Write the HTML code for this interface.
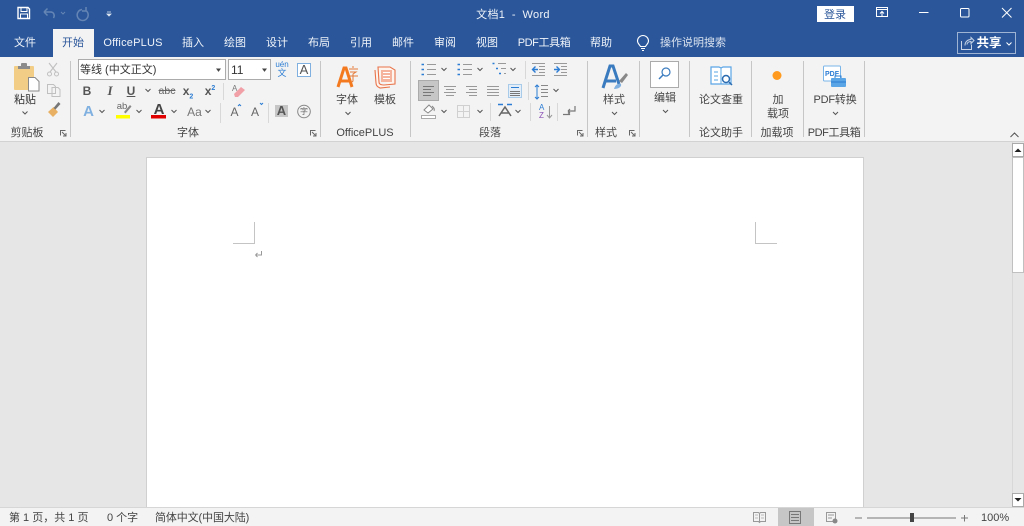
<!DOCTYPE html>
<html><head><meta charset="utf-8"><style>
html,body{margin:0;padding:0;width:1024px;height:526px;overflow:hidden;background:#e6e6e6}
body{position:relative;font-family:"Liberation Sans","Noto Sans CJK SC",sans-serif;font-size:11px;color:#444}
.a{position:absolute}
.t{position:absolute;white-space:nowrap;line-height:14px;transform:translateX(-50%)}
.w{font-size:11px;color:#f0f4fa}
.s{position:absolute;background:#c6c6c6;width:1px}
svg{position:absolute;left:0;top:0}
</style></head><body>
<div class="a" style="left:0;top:0;width:1024px;height:57px;background:#2b579a"></div>
<div class="a" style="left:0;top:57px;width:1024px;height:84px;background:#f3f3f3"></div>
<div class="a" style="left:0;top:141px;width:1024px;height:1px;background:#d2d2d2"></div>
<div class="a" style="left:53px;top:29px;width:41px;height:28px;background:#f3f3f3"></div>
<div class="t w" style="left:513px;top:8px;letter-spacing:.3px">文档1 &nbsp;-&nbsp; Word</div>
<div class="t w" style="left:25px;top:36px">文件</div>
<div class="t" style="left:73px;top:36px;color:#2b579a">开始</div>
<div class="t w" style="left:133px;top:36px;letter-spacing:.2px">OfficePLUS</div>
<div class="t w" style="left:193px;top:36px">插入</div>
<div class="t w" style="left:235px;top:36px">绘图</div>
<div class="t w" style="left:277px;top:36px">设计</div>
<div class="t w" style="left:319px;top:36px">布局</div>
<div class="t w" style="left:361px;top:36px">引用</div>
<div class="t w" style="left:403px;top:36px">邮件</div>
<div class="t w" style="left:445px;top:36px">审阅</div>
<div class="t w" style="left:487px;top:36px">视图</div>
<div class="t w" style="left:544px;top:36px;letter-spacing:-.4px">PDF工具箱</div>
<div class="t w" style="left:601px;top:36px">帮助</div>
<div class="t w" style="left:693px;top:36px;color:#dbe3ef">操作说明搜索</div>
<div class="a" style="left:817px;top:6px;width:37px;height:16px;background:#fff"></div>
<div class="t" style="left:835px;top:8px;color:#2b579a">登录</div>
<div class="a" style="left:957px;top:32px;width:59px;height:22px;border:1px solid #9fb4d3;box-sizing:border-box"></div>
<div class="t" style="left:989px;top:36px;color:#fff;font-weight:bold;font-size:12.500px">共享</div>

<!-- combo boxes -->
<div class="a" style="left:78px;top:59px;width:148px;height:21px;background:#fff;border:1px solid #ababab;box-sizing:border-box"></div>
<div class="a" style="left:228px;top:59px;width:43px;height:21px;background:#fff;border:1px solid #ababab;box-sizing:border-box"></div>
<div class="a" style="left:80px;top:63px;white-space:nowrap;line-height:14px;color:#333">等线 (中文正文)</div>
<div class="a" style="left:231px;top:63px;line-height:14px;color:#333;font-size:12px">11</div>
<div class="a" style="left:418px;top:80px;width:21px;height:21px;background:#c6c6c6;border:1px solid #ababab;box-sizing:border-box"></div>
<div class="a" style="left:650px;top:61px;width:29px;height:27px;background:#fff;border:1px solid #ababab;box-sizing:border-box"></div>

<!-- separators -->
<div class="s" style="left:70px;top:61px;height:76px"></div>
<div class="s" style="left:320px;top:61px;height:76px"></div>
<div class="s" style="left:410px;top:61px;height:76px"></div>
<div class="s" style="left:587px;top:61px;height:76px"></div>
<div class="s" style="left:639px;top:61px;height:76px"></div>
<div class="s" style="left:689px;top:61px;height:76px"></div>
<div class="s" style="left:751px;top:61px;height:76px"></div>
<div class="s" style="left:803px;top:61px;height:76px"></div>
<div class="s" style="left:864px;top:61px;height:76px"></div>
<div class="s" style="left:220px;top:103px;height:20px;background:#d8d8d8"></div>
<div class="s" style="left:268px;top:103px;height:20px;background:#d8d8d8"></div>
<div class="s" style="left:223px;top:83px;height:17px;background:#d8d8d8"></div>
<div class="s" style="left:525px;top:61px;height:18px;background:#d8d8d8"></div>
<div class="s" style="left:528px;top:82px;height:18px;background:#d8d8d8"></div>
<div class="s" style="left:490px;top:103px;height:18px;background:#d8d8d8"></div>
<div class="s" style="left:530px;top:103px;height:18px;background:#d8d8d8"></div>
<div class="s" style="left:557px;top:103px;height:18px;background:#d8d8d8"></div>

<!-- ribbon labels -->
<div class="t" style="left:25px;top:93px;color:#333">粘贴</div>
<div class="t" style="left:347px;top:93px">字体</div>
<div class="t" style="left:385px;top:93px">模板</div>
<div class="t" style="left:614px;top:93px">样式</div>
<div class="t" style="left:665px;top:91px">编辑</div>
<div class="t" style="left:721px;top:93px">论文查重</div>
<div class="t" style="left:778px;top:93px">加</div>
<div class="t" style="left:778px;top:107px">载项</div>
<div class="t" style="left:835px;top:93px;letter-spacing:-.2px">PDF转换</div>
<div class="t" style="left:27px;top:126px">剪贴板</div>
<div class="t" style="left:188px;top:126px">字体</div>
<div class="t" style="left:365px;top:126px">OfficePLUS</div>
<div class="t" style="left:490px;top:126px">段落</div>
<div class="t" style="left:606px;top:126px">样式</div>
<div class="t" style="left:721px;top:126px">论文助手</div>
<div class="t" style="left:777px;top:126px">加载项</div>
<div class="t" style="left:834px;top:126px;letter-spacing:-.4px">PDF工具箱</div>

<!-- font row text -->
<div class="t" style="left:87px;top:84px;font-weight:bold;font-size:12px;color:#555">B</div>
<div class="t" style="left:110px;top:84px;font-style:italic;font-family:'Liberation Serif',serif;font-size:13px;font-weight:bold;color:#555">I</div>
<div class="t" style="left:131px;top:84px;font-weight:bold;font-size:12px;text-decoration:underline;color:#555">U</div>
<div class="t" style="left:167px;top:84px;font-size:10.500px;text-decoration:line-through;color:#666">abc</div>
<div class="t" style="left:188px;top:84px;font-weight:bold;font-size:12px;color:#555">x<sub style="font-size:7px;color:#2b7cd3;line-height:0">2</sub></div>
<div class="t" style="left:210px;top:84px;font-weight:bold;font-size:12px;color:#555">x<sup style="font-size:7px;color:#2b7cd3;line-height:0">2</sup></div>
<div class="t" style="left:88.500px;top:105px;font-size:15px;font-weight:bold;color:#7fb0e0">A</div>
<div class="t" style="left:122px;top:100px;font-size:9.500px;color:#666">ab</div>
<div class="t" style="left:159px;top:103px;font-size:15px;color:#444;font-weight:bold">A</div>
<div class="t" style="left:194.500px;top:105px;font-size:12px;color:#777">Aa</div>
<div class="t" style="left:234.500px;top:105px;font-size:12px;color:#666">A</div>
<div class="t" style="left:255px;top:105px;font-size:12px;color:#666">A</div>
<div class="a" style="left:275px;top:105px;width:13px;height:12px;background:#c6c6c6;text-align:center;font-weight:bold;font-size:13px;line-height:12px;color:#555">A</div>
<div class="t" style="left:304px;top:105px;font-size:8px;color:#666">字</div>
<div class="t" style="left:282px;top:61px;font-size:8px;line-height:8px;color:#2b7cd3">uén</div>
<div class="t" style="left:282px;top:68px;font-size:9px;line-height:10px;color:#2b7cd3">文</div>
<div class="a" style="left:297px;top:63px;width:14px;height:14px;box-sizing:border-box;font-size:13px;line-height:12px;text-align:center;border:1px solid #7fb0e0;background:#fff;color:#555">A</div>

<!-- document area -->
<div class="a" style="left:146px;top:157px;width:718px;height:351px;background:#fff;border:1px solid #d0d0d0;box-sizing:border-box"></div>
<!-- scrollbar -->
<div class="a" style="left:1012px;top:142px;width:12px;height:365px;background:#e6e6e6;border-left:1px solid #d8d8d8;box-sizing:border-box"></div>
<div class="a" style="left:1012px;top:143px;width:12px;height:14px;background:#fff;border:1px solid #aaa;box-sizing:border-box"></div>
<div class="a" style="left:1012px;top:157px;width:12px;height:116px;background:#fff;border:1px solid #c0c0c0;box-sizing:border-box"></div>
<div class="a" style="left:1012px;top:493px;width:12px;height:14px;background:#fff;border:1px solid #aaa;box-sizing:border-box"></div>
<!-- status -->
<div class="a" style="left:0;top:507px;width:1024px;height:19px;background:#f3f3f3;border-top:1px solid #d6d6d6;box-sizing:border-box"></div>
<div class="a" style="left:778px;top:508px;width:36px;height:18px;background:#c6c6c6"></div>
<div class="a" style="left:9px;top:511px;white-space:nowrap;line-height:14px;color:#444">第 1 页，共 1 页</div>
<div class="a" style="left:107px;top:511px;white-space:nowrap;line-height:14px;color:#444">0 个字</div>
<div class="a" style="left:155px;top:511px;white-space:nowrap;line-height:14px;color:#444;letter-spacing:-.12px">简体中文(中国大陆)</div>
<div class="a" style="left:981px;top:511px;white-space:nowrap;line-height:14px;color:#444">100%</div>

<svg width="1024" height="526" viewBox="0 0 1024 526" fill="none">
<!-- QAT -->
<path d="M18 7.500h10l1.500 1.500v9.500h-11.500z" stroke="#fff" stroke-width="1.400"/><path d="M21 8v3.500h6V8M20.500 18.500v-4.500h7v4.500" stroke="#fff"/>
<path d="M44 12l3.500-3.500M44 12l3.500 3.500M44.500 12h6c3.500 0 4.500 3.500 3 6" stroke="#6585b5" stroke-width="1.500"/>
<path d="M61 12l2 2 2-2" stroke="#6585b5"/>
<path d="M82 9.500a5.500 5.500 0 1 0 4.500 1.500M86 7v4h-4" stroke="#6585b5" stroke-width="1.500"/>
<path d="M107 12h4M107 14h4l-2 2z" stroke="#dfe7f2" fill="#dfe7f2" stroke-width=".8"/>
<!-- window -->
<rect x="876.500" y="7.500" width="11" height="9" stroke="#fff"/><path d="M876 9.500h12M882 16v-4M880 13.500l2-2 2 2" stroke="#fff"/>
<path d="M919 12.500h9.500" stroke="#fff"/>
<rect x="960.500" y="8.500" width="8.500" height="8.500" rx="1" stroke="#fff"/>
<path d="M1002 8l9.500 9.500M1011.500 8l-9.500 9.500" stroke="#fff"/>
<!-- bulb -->
<path d="M640.500 46.500c-1-2-3-3-3-5.500a5.500 5.500 0 0 1 11 0c0 2.500-2 3.500-3 5.500zM641 48.500h4M642 50.500h2" stroke="#fff" stroke-width="1.100"/>
<!-- share -->
<path d="M961.500 41v8.500h10v-5M965 45.500c0-4 3-6 6-6v-2l3 3-3 3v-2c-2 0-4 1-4 3" stroke="#c8d4e6"/>
<path d="M1006.500 42.500l2.500 2.500 2.500-2.500" stroke="#fff"/>
<!-- paste -->
<rect x="14" y="66" width="20" height="24" rx="1" fill="#f2cd86"/>
<rect x="21" y="63" width="6" height="4" rx="1" fill="#8b8b8b"/><rect x="18" y="66" width="12" height="3" fill="#8b8b8b"/>
<path d="M28.500 77.500h6.500l4 4v9.500h-10.500z" fill="#fff" stroke="#8a8a8a"/>
<path d="M22.500 111.500l2.500 2.500 2.500-2.500" stroke="#555"/>
<!-- cut copy painter -->
<path d="M49 63l7 9M57 63l-7 9" stroke="#c0c0c0" stroke-width="1.100"/><circle cx="49.500" cy="74" r="2" stroke="#c0c0c0"/><circle cx="56.500" cy="74" r="2" stroke="#c0c0c0"/>
<path d="M47.500 84.500h6l2 2v7h-8zM52 87.500h6l2 2v7h-8z" fill="#f3f3f3" stroke="#c0c0c0"/>
<path d="M48 112l5 5 5-5-4.500-5z" fill="#e8b062"/><path d="M53.500 108l5-6 2 2-5 5.500z" fill="#777"/>
<!-- dialog launchers -->
<g stroke="#666"><path d="M60.500 135.500v-5h5M62 132l4 4M66 133v3h-3"/><path d="M310.500 135.500v-5h5M312 132l4 4M316 133v3h-3"/><path d="M577.500 135.500v-5h5M579 132l4 4M583 133v3h-3"/><path d="M629.500 135.500v-5h5M631 132l4 4M635 133v3h-3"/></g>
<!-- combos arrows -->
<path d="M217 69l3 0-1.500 2z M263 69l3 0-1.500 2z" fill="#444" stroke="#444"/>
<g stroke="#555"><path d="M145.500 89l2.500 2.500 2.500-2.500M99.500 110l2.500 2.500 2.500-2.500M136.500 110l2.500 2.500 2.500-2.500M171.500 110l2.500 2.500 2.500-2.500M205.500 110l2.500 2.500 2.500-2.500M441.500 68l2.500 2.500 2.500-2.500M477.500 68l2.500 2.500 2.500-2.500M510.500 68l2.500 2.500 2.500-2.500M553.500 89l2.500 2.500 2.500-2.500M441.500 110l2.500 2.500 2.500-2.500M477.500 110l2.500 2.500 2.500-2.500M515.500 110l2.500 2.500 2.500-2.500M345.500 112l2.500 2.500 2.500-2.500M612 112l2.500 2.500 2.500-2.500M663 110l2.500 2.500 2.500-2.500M833 112l2.500 2.500 2.500-2.500M1010.500 137l4-4 4 4"/></g>
<!-- highlight/color bars -->
<rect x="116" y="115" width="14" height="3.500" fill="#ffff00"/><path d="M124 112l6-7 1.500 1.500-6 7z" fill="#888"/>
<rect x="151" y="115" width="15" height="3.500" fill="#e00000"/>
<!-- eraser -->
<path d="M234 94l7-7 4 3-7 7h-3z" fill="#f2a0a8"/><text x="232" y="91" font-size="8" fill="#777" font-family="Liberation Sans">A</text>
<path d="M238 106l1.500-1.500 1.500 1.500M260 103l1.500 1.500 1.500-1.500" stroke="#2b7cd3"/>
<circle cx="304" cy="111.500" r="6.300" stroke="#888"/>
<!-- OfficePLUS -->
<path d="M338 87l6-19h2l6 19M341 81h8" stroke="#f47a20" stroke-width="3"/>
<path d="M349 69h9M353 66v2M350 72h6l-3 2v7l-1 1M349 76h9" stroke="#e57b39"/>
<path d="M378 67h12l5 3v14l-11 1c-3 0-5-1-5-3zM375 70l1 13c0 3 2 4 4 5l10-1" stroke="#e8734a" stroke-width="1.100" fill="#fff5ef"/>
<path d="M381 70h11v12h-11z" fill="#f4b49d"/><path d="M383 72.500h7M383 75.500h7M383 78.500h7" stroke="#fff"/>
<!-- para lists -->
<path d="M427 64.500h9M427 69.500h9M427 74.500h9M463 64.500h9M463 69.500h9M463 74.500h9M498 63.500h8M501 68.500h5M504 73.500h2" stroke="#999"/>
<path d="M421.500 64.500h2.500M421.500 69.500h2.500M421.500 74.500h2.500M457.500 64.500h2.500M457.500 69.500h2.500M457.500 74.500h2.500M492.500 63.500h2M496 68.500h2M499 73.500h2" stroke="#2b7cd3" stroke-width="1.500"/>
<path d="M532 63.500h13M539 66.500h6M539 69.500h6M539 72.500h6M532 75.500h13M554 63.500h13M561 66.500h6M561 69.500h6M561 72.500h6M554 75.500h13" stroke="#999"/>
<path d="M538 69.500h-5M535.500 66.500l-3 3 3 3M554 69.500h5M556.500 66.500l3 3-3 3" stroke="#2b7cd3" stroke-width="1.400"/>
<path d="M423 86.500h11M423 89.500h8M423 92.500h11M423 95.500h8" stroke="#777"/>
<path d="M444 86.500h12M446 89.500h8M444 92.500h12M446 95.500h8M466 86.500h11M469 89.500h8M466 92.500h11M469 95.500h8M487 86.500h12M487 89.500h12M487 92.500h12M487 95.500h12" stroke="#999"/>
<path d="M508.500 84.500h13v13h-13z" stroke="#a9cbea" fill="#e4eef8"/><path d="M510 91.500h10M510 93.500h10M510 95.500h10" stroke="#777"/><path d="M511 87.500h8" stroke="#2b7cd3"/>
<path d="M541 85.500h7M541 89.500h7M541 92.500h7M541 96.500h7" stroke="#888"/><path d="M537 85v14M535 87l2-2 2 2M535 97l2 2 2-2" stroke="#2b7cd3"/>
<path d="M424 110l5-5 4 4-5 4zM432 106c2 2 3 3 2 5" fill="#fff" stroke="#888"/><path d="M421.500 115.500h14v3h-14z" fill="#fff" stroke="#aaa"/>
<path d="M457.500 105.500h12v12h-12zM463.500 105.500v12M457.500 111.500h12" stroke="#d0d0d0"/>
<path d="M499 116l6-9 6 9M501 113h8" stroke="#666" stroke-width="1.500"/><path d="M498 104.500h5M507 104.500h5" stroke="#2b7cd3" stroke-width="1.500"/>
<text x="539" y="110" font-size="8" fill="#2b7cd3" font-family="Liberation Sans">A</text><text x="539" y="118" font-size="8" fill="#8a4fb5" font-family="Liberation Sans">Z</text><path d="M549.500 106v12M547 115l2.500 3 2.500-3" stroke="#999"/>
<path d="M575 106v5h-7M568 111l2-2M568 111l2 2M563 114.500h7M570 114.500l-2-2" stroke="#777" stroke-width="1.200"/>
<!-- styles -->
<path d="M603 88l7-22h3l6 18M606 81h10" stroke="#3a7bbf" stroke-width="3"/><path d="M619 81l7-8 2 2-6 8z" fill="#888"/><path d="M614 89c1-4 4-6 7-5 1 3-3 5-7 5z" fill="#7fb0e0"/>
<!-- edit -->
<circle cx="666" cy="72" r="4" stroke="#3a7bbf" stroke-width="1.200"/><path d="M663 75l-4 4" stroke="#3a7bbf" stroke-width="1.500"/>
<!-- thesis -->
<path d="M711 67h8l2 1 2-1h8v17h-20z" stroke="#5aa5e6" stroke-width="1.200" fill="#fff"/><path d="M721 68v16M714 72h4M714 76h4M714 80h4" stroke="#5aa5e6"/><circle cx="726" cy="79" r="3.500" stroke="#2b6cb0" stroke-width="1.500" fill="#fff"/><path d="M729 82l3 3" stroke="#2b6cb0" stroke-width="1.500"/>
<circle cx="777" cy="75.500" r="4.500" fill="#ff9a1e"/>
<!-- pdf -->
<rect x="823.500" y="66" width="17" height="15" rx="1" fill="#fff" stroke="#7ab5ea"/><text x="825" y="76" font-size="7" font-weight="bold" fill="#2b7cd3" font-family="Liberation Sans">PDF</text>
<rect x="831" y="78" width="15" height="9" rx="1" fill="#5aa5e6"/><path d="M835 78v-2h6v2M831 82h15" stroke="#2b7cd3"/>
<!-- crop marks -->
<path d="M254.500 222v21.500H233M755.500 222v21.500H777" stroke="#c4c4c4"/>
<path d="M261.500 251v4h-6M255.500 255l2-2M255.500 255l2 2" stroke="#999"/>
<!-- scroll arrows -->
<path d="M1014.500 152h7l-3.500-3.500z" fill="#222"/><path d="M1014.500 498h7l-3.500 3.500z" fill="#222"/>
<!-- status icons -->
<path d="M753.500 512.500h5l1 1 1-1h5v9h-5l-1 1-1-1h-5zM759.500 513v9" stroke="#999"/>
<path d="M755 515h3M755 518h3M761 515h3M761 518h3" stroke="#bbb"/>
<path d="M789.500 511.500h11v12h-11zM791 514.500h8M791 517.500h8M791 520.500h8" stroke="#777"/>
<path d="M826.500 512.500h9v9h-9zM828 515h6M828 518h4" stroke="#999"/><circle cx="835" cy="521" r="2.500" fill="#888"/>
<path d="M855 518h7M867 518h89M961 518h7M964.500 515v6.500" stroke="#777"/>
<rect x="910" y="513" width="4" height="9" fill="#444"/>
</svg>
</body></html>
